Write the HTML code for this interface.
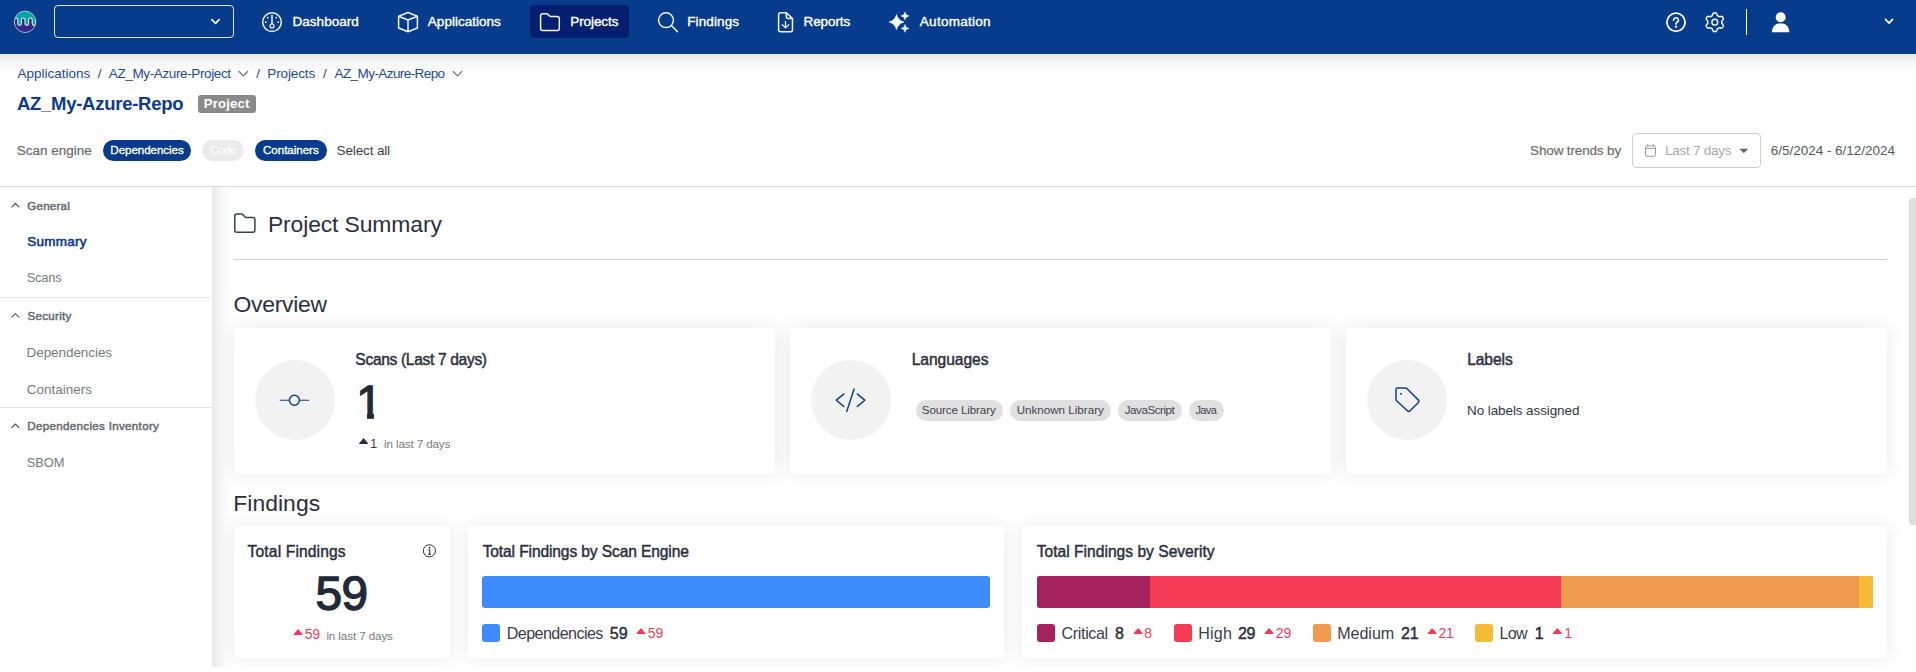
<!DOCTYPE html>
<html lang="en">
<head>
<meta charset="utf-8">
<title>AZ_My-Azure-Repo - Project Summary</title>
<style>
*{box-sizing:border-box;margin:0;padding:0}
html,body{width:1916px;height:672px;overflow:hidden;background:#fff}
body{position:relative;font-family:"Liberation Sans",Arial,sans-serif;color:#2b3040}
.a{position:absolute}
.t{position:absolute;white-space:nowrap;line-height:1;font-weight:400;paint-order:stroke fill}
svg{position:absolute;overflow:visible}
#nav{left:0;top:0;width:1916px;height:54px;background:#073b8c}
#navsh{left:0;top:54px;width:1916px;height:19px;background:linear-gradient(180deg,rgba(0,0,0,.088),rgba(0,0,0,.07) 17%,rgba(0,0,0,.044) 38%,rgba(0,0,0,.022) 60%,rgba(0,0,0,.008) 80%,rgba(0,0,0,0))}
#orgsel{left:54px;top:5px;width:180px;height:33px;border:1px solid rgba(255,255,255,.88);border-radius:4px}
#active{left:530px;top:5px;width:99px;height:33px;border-radius:4px;background:#041f6f}
#navdiv{left:1746px;top:9px;width:1px;height:26px;background:#fff}
#hdrline{left:0;top:186px;width:1916px;height:1px;background:#d6dadc}
#side{left:0;top:187px;width:212px;height:485px;background:#fff}
.sdiv{left:0;width:212px;height:1px;background:#e4e6e7}
#content{left:212px;top:187px;width:1704px;height:480px;background:#fff;overflow:hidden}
#content:before{content:"";position:absolute;left:0;top:0;width:20px;height:100%;background:linear-gradient(90deg,rgba(0,0,0,.09),rgba(0,0,0,.045) 35%,rgba(0,0,0,.015) 70%,rgba(0,0,0,0))}
#scroll{left:1909px;top:198px;width:7px;height:327px;border-radius:4px 0 0 4px;background:#dedede}
#hr{left:234px;top:259px;width:1653px;height:1px;background:#cbd2d6}
.card{background:#fff;border-radius:4px;box-shadow:0 0 20px rgba(0,0,0,.09)}
.circ{width:80px;height:80px;border-radius:50%;background:#f2f2f2}
.badge{left:198px;top:95px;width:58px;height:17.5px;border-radius:3px;background:#8b8b8b}
.pill{top:140px;height:21px;border-radius:11px;background:#073b8c}
.lpill{top:400px;height:21px;border-radius:11px;background:#e0e0e0}
#dd{left:1632px;top:133px;width:129px;height:35px;border:1px solid #c9ced1;border-radius:4px;background:#fff}
.bar{top:576px;height:32px}
.sq{top:623.5px;width:18px;height:18px;border-radius:3px}

</style>
</head>
<body>
<div class="a" id="hdrline"></div>
<div class="a" id="side"></div>
<div class="a sdiv" style="top:297px"></div>
<div class="a sdiv" style="top:407px"></div>
<div class="a" id="content">
<div class="a card" style="left:22px;top:141px;width:541px;height:145.5px"></div>
<div class="a card" style="left:578px;top:141px;width:541px;height:145.5px"></div>
<div class="a card" style="left:1134px;top:141px;width:541px;height:145.5px"></div>
<div class="a card" style="left:22px;top:339px;width:216px;height:131.7px"></div>
<div class="a card" style="left:256px;top:339px;width:536px;height:131.7px"></div>
<div class="a card" style="left:810px;top:339px;width:865px;height:131.7px"></div>
</div>
<div class="a" id="scroll"></div>
<div class="a" id="navsh"></div>
<div class="a" id="nav"></div>
<div class="a" id="orgsel"></div>
<div class="a" id="active"></div>
<div class="a" id="navdiv"></div>
<div class="a badge"></div>
<div class="a pill" style="left:103px;width:88px"></div>
<div class="a pill" style="left:202px;width:42px;background:#ebebec"></div>
<div class="a pill" style="left:255px;width:72px"></div>
<div class="a" id="dd"></div>
<div class="a" id="hr"></div>
<div class="a circ" style="left:254.5px;top:360px"></div>
<div class="a circ" style="left:810.5px;top:360px"></div>
<div class="a circ" style="left:1367px;top:360px"></div>
<div class="a lpill" style="left:916px;width:86.5px"></div>
<div class="a lpill" style="left:1010px;width:101px"></div>
<div class="a lpill" style="left:1118px;width:64px"></div>
<div class="a lpill" style="left:1189px;width:35px"></div>
<div class="a bar" style="left:482px;width:508px;background:#3d8bfd;border-radius:3px"></div>
<div class="a bar" style="left:1037px;width:836px;border-radius:3px;overflow:hidden;background:#f63b57">
  <div class="a" style="left:0;top:0;width:113px;height:32px;background:#a6225f"></div>
  <div class="a" style="left:524px;top:0;width:298px;height:32px;background:#ee9b4e"></div>
  <div class="a" style="left:822px;top:0;width:14px;height:32px;background:#f5ba36"></div>
</div>
<div class="a sq" style="left:482px;background:#3d8bfd"></div>
<div class="a sq" style="left:1037px;background:#a6225f"></div>
<div class="a sq" style="left:1174px;background:#f63b57"></div>
<div class="a sq" style="left:1313px;background:#ee9b4e"></div>
<div class="a sq" style="left:1475px;background:#f5ba36"></div>
<!-- icons -->
<svg id="icons" width="1916" height="672" viewBox="0 0 1916 672" style="left:0;top:0" fill="none">
<defs><clipPath id="lc"><circle cx="25.1" cy="21.8" r="10.7"/></clipPath></defs>
<g clip-path="url(#lc)"><rect x="13" y="10" width="25" height="24" fill="#05a5a3"/>
<path d="M14.2 36 V19.8 A1.8 1.8 0 0 1 17.8 19.8 V23.6 A1.8 1.8 0 0 0 21.4 23.6 V19.8 A1.8 1.8 0 0 1 25.0 19.8 V23.6 A1.8 1.8 0 0 0 28.6 23.6 V19.8 A1.8 1.8 0 0 1 32.2 19.8 V23.6 A1.8 1.8 0 0 0 35.8 23.6 V19.8 A1.8 1.8 0 0 1 39.4 19.8 V23.6 A1.8 1.8 0 0 0 43.0 23.6 V19.8 V36 Z" fill="#33288a" stroke="#e2f6f6" stroke-width="1.05"/></g>
<circle cx="25.1" cy="21.8" r="10.7" stroke="rgba(225,225,245,.75)" stroke-width="0.9"/>
<path d="M211.9 19.7 L215.5 23.3 L219.1 19.7" stroke="#fff" stroke-width="1.7" stroke-linecap="round" stroke-linejoin="round"/>
<g stroke="#fff" stroke-width="1.5" stroke-linecap="round" stroke-linejoin="round" opacity=".95">
<circle cx="272" cy="22.1" r="9.3"/><path d="M272 15.6 V23.8"/><circle cx="272" cy="25.9" r="2" stroke-width="1.2"/>
<circle cx="267.7" cy="17.7" r="0.9" fill="#fff" stroke="none"/>
<circle cx="276.2" cy="17.7" r="0.9" fill="#fff" stroke="none"/>
<circle cx="265.8" cy="22.2" r="0.9" fill="#fff" stroke="none"/>
<circle cx="278.1" cy="22.2" r="0.9" fill="#fff" stroke="none"/>
<path d="M408 12.5 L417.4 16.3 V28 L408 31.7 L398.6 28 V16.3 Z M398.6 16.3 L408 20 L417.4 16.3 M408 20 V31.7"/>
<path d="M542.6 13.7 H546.6 a1.6 1.6 0 0 1 1.1 .45 L549.6 15.95 a1.6 1.6 0 0 0 1.1 .45 H557.3 a2 2 0 0 1 2 2 V28.4 a2 2 0 0 1 -2 2 H542.6 a2 2 0 0 1 -2 -2 V15.7 a2 2 0 0 1 2 -2 Z" stroke-width="1.5"/>
<circle cx="666" cy="20.2" r="7.4"/><path d="M671.6 25.8 L677.4 31.6"/>
<path d="M780.6 12.7 H786.4 L792.5 18.6 V29.7 a2 2 0 0 1 -2 2 H780.6 a2 2 0 0 1 -2 -2 V14.7 a2 2 0 0 1 2 -2 Z M786.3 12.9 V16.6 a1.8 1.8 0 0 0 1.8 1.8 H792.3"/>
<path d="M785.5 21.3 V27.6 M782.2 24.6 L785.5 27.9 L788.8 24.6" stroke-width="1.3"/>
</g>
<path d="M896.50 14.60 Q898.00 20.60 904.00 22.10 Q898.00 23.60 896.50 29.60 Q895.00 23.60 889.00 22.10 Q895.00 20.60 896.50 14.60 Z M905.00 12.00 Q905.39 15.51 908.90 15.90 Q905.39 16.29 905.00 19.80 Q904.61 16.29 901.10 15.90 Q904.61 15.51 905.00 12.00 Z M905.00 24.50 Q905.39 28.01 908.90 28.40 Q905.39 28.79 905.00 32.30 Q904.61 28.79 901.10 28.40 Q904.61 28.01 905.00 24.50 Z" fill="#fff" stroke="#fff" stroke-width="0.6" stroke-linejoin="round"/>
<circle cx="1676" cy="22.2" r="9.1" stroke="#fff" stroke-width="1.8"/>
<path d="M1673.5 20.2 a2.45 2.4 0 1 1 3.9 1.9 c-.9 .55 -1.4 .95 -1.4 1.8" stroke="#fff" stroke-width="1.7" stroke-linecap="round" stroke-linejoin="round"/><circle cx="1676" cy="26.6" r="1.2" fill="#fff"/>
<path d="M1721.80 22.20 L1721.80 21.96 L1721.78 21.71 L1721.76 21.47 L1721.73 21.23 L1721.98 20.93 L1722.25 20.62 L1722.53 20.27 L1722.81 19.90 L1723.06 19.52 L1723.27 19.12 L1723.42 18.72 L1723.30 18.42 L1723.16 18.12 L1723.01 17.83 L1722.85 17.55 L1722.69 17.27 L1722.51 17.00 L1722.32 16.73 L1722.13 16.47 L1721.70 16.41 L1721.25 16.39 L1720.79 16.41 L1720.34 16.47 L1719.90 16.54 L1719.48 16.62 L1719.11 16.68 L1718.91 16.54 L1718.71 16.40 L1718.51 16.26 L1718.30 16.14 L1718.09 16.02 L1717.87 15.91 L1717.65 15.81 L1717.42 15.71 L1717.29 15.35 L1717.15 14.96 L1717.00 14.54 L1716.82 14.12 L1716.61 13.71 L1716.37 13.32 L1716.09 12.99 L1715.77 12.95 L1715.45 12.92 L1715.12 12.91 L1714.80 12.90 L1714.48 12.91 L1714.15 12.92 L1713.83 12.95 L1713.51 12.99 L1713.23 13.32 L1712.99 13.71 L1712.78 14.12 L1712.60 14.54 L1712.45 14.96 L1712.31 15.35 L1712.18 15.71 L1711.95 15.81 L1711.73 15.91 L1711.51 16.02 L1711.30 16.14 L1711.09 16.26 L1710.89 16.40 L1710.69 16.54 L1710.49 16.68 L1710.12 16.62 L1709.70 16.54 L1709.26 16.47 L1708.81 16.41 L1708.35 16.39 L1707.90 16.41 L1707.47 16.47 L1707.28 16.73 L1707.09 17.00 L1706.91 17.27 L1706.75 17.55 L1706.59 17.83 L1706.44 18.12 L1706.30 18.42 L1706.18 18.72 L1706.33 19.12 L1706.54 19.52 L1706.79 19.90 L1707.07 20.27 L1707.35 20.62 L1707.62 20.93 L1707.87 21.23 L1707.84 21.47 L1707.82 21.71 L1707.80 21.96 L1707.80 22.20 L1707.80 22.44 L1707.82 22.69 L1707.84 22.93 L1707.87 23.17 L1707.62 23.47 L1707.35 23.78 L1707.07 24.13 L1706.79 24.50 L1706.54 24.88 L1706.33 25.28 L1706.18 25.68 L1706.30 25.98 L1706.44 26.28 L1706.59 26.57 L1706.75 26.85 L1706.91 27.13 L1707.09 27.40 L1707.28 27.67 L1707.47 27.93 L1707.90 27.99 L1708.35 28.01 L1708.81 27.99 L1709.26 27.93 L1709.70 27.86 L1710.12 27.78 L1710.49 27.72 L1710.69 27.86 L1710.89 28.00 L1711.09 28.14 L1711.30 28.26 L1711.51 28.38 L1711.73 28.49 L1711.95 28.59 L1712.18 28.69 L1712.31 29.05 L1712.45 29.44 L1712.60 29.86 L1712.78 30.28 L1712.99 30.69 L1713.23 31.08 L1713.51 31.41 L1713.83 31.45 L1714.15 31.48 L1714.48 31.49 L1714.80 31.50 L1715.12 31.49 L1715.45 31.48 L1715.77 31.45 L1716.09 31.41 L1716.37 31.08 L1716.61 30.69 L1716.82 30.28 L1717.00 29.86 L1717.15 29.44 L1717.29 29.05 L1717.42 28.69 L1717.65 28.59 L1717.87 28.49 L1718.09 28.38 L1718.30 28.26 L1718.51 28.14 L1718.71 28.00 L1718.91 27.86 L1719.11 27.72 L1719.48 27.78 L1719.90 27.86 L1720.34 27.93 L1720.79 27.99 L1721.25 28.01 L1721.70 27.99 L1722.13 27.93 L1722.32 27.67 L1722.51 27.40 L1722.69 27.13 L1722.85 26.85 L1723.01 26.57 L1723.16 26.28 L1723.30 25.98 L1723.42 25.68 L1723.27 25.28 L1723.06 24.88 L1722.81 24.50 L1722.53 24.13 L1722.25 23.78 L1721.98 23.47 L1721.73 23.17 L1721.76 22.93 L1721.78 22.69 L1721.80 22.44 Z" stroke="#fff" stroke-width="1.45" stroke-linejoin="round"/>
<circle cx="1714.8" cy="22.2" r="2.9" stroke="#fff" stroke-width="1.4"/>
<circle cx="1780.7" cy="17.2" r="5" fill="#fff"/>
<path d="M1771.9 32.2 C1771.9 27.2 1775.3 23.6 1778.6 23.6 H1782.7 C1786 23.6 1789.3 27.2 1789.3 32.2 Z" fill="#fff"/>
<path d="M1885.5 19.3 L1889.05 23.1 L1892.6 19.3" stroke="#fff" stroke-width="1.7" stroke-linecap="round" stroke-linejoin="round"/>
<path d="M239.0 71.5 L243.3 75.9 L247.6 71.5" stroke="#697386" stroke-width="1.2" stroke-linecap="round" stroke-linejoin="round"/>
<path d="M453.2 71.5 L457.5 75.9 L461.8 71.5" stroke="#697386" stroke-width="1.2" stroke-linecap="round" stroke-linejoin="round"/>
<path d="M11.8 207.0 L15.4 203.4 L19 207.0" stroke="#555b63" stroke-width="1.15" stroke-linecap="round" stroke-linejoin="round"/>
<path d="M11.8 317.2 L15.4 313.6 L19 317.2" stroke="#555b63" stroke-width="1.15" stroke-linecap="round" stroke-linejoin="round"/>
<path d="M11.8 427.6 L15.4 424.0 L19 427.6" stroke="#555b63" stroke-width="1.15" stroke-linecap="round" stroke-linejoin="round"/>
<g stroke="#9b9b9b" stroke-width="1"><rect x="1645.5" y="145.9" width="10" height="10.4" rx="1.4" fill="#fff"/><path d="M1645.5 148.4 H1655.5 M1647.6 144 V146 M1653.4 144 V146"/></g>
<path d="M1739.9 149 H1747.7 L1743.8 153 Z" fill="#666" stroke="#666" stroke-width="0.5" stroke-linejoin="round"/>
<path d="M236.8 214 H241.5 a1.8 1.8 0 0 1 1.2 .5 L245 216.9 a1.8 1.8 0 0 0 1.2 .5 H252.9 a2 2 0 0 1 2 2 V230.2 a2 2 0 0 1 -2 2 H236.8 a2 2 0 0 1 -2 -2 V216 a2 2 0 0 1 2 -2 Z" stroke="#364052" stroke-width="1.5" stroke-linejoin="round"/>
<g stroke="#0f3f8f" stroke-linecap="round"><circle cx="294.4" cy="400.2" r="5" stroke-width="1.45"/><path d="M280.2 400.2 H289.2 M299.6 400.2 H308.6" stroke-width="1.15"/></g>
<path d="M843.7 394.1 L836.3 400.2 L843.7 406.4 M854.1 389 L846.7 411.4 M857.4 394.1 L864.8 400.2 L857.4 406.4" stroke="#0f3f8f" stroke-width="1.5" stroke-linecap="round" stroke-linejoin="round"/>
<path d="M1397.6 388 H1405.4 a2 2 0 0 1 1.4 .6 L1418.2 399.9 a2 2 0 0 1 0 2.8 L1410.1 410.7 a2 2 0 0 1 -2.8 0 L1396.6 400.8 a2 2 0 0 1 -.6 -1.4 V389.6 a1.6 1.6 0 0 1 1.6 -1.6 Z" stroke="#0f3f8f" stroke-width="1.5" stroke-linejoin="round"/><circle cx="1401.1" cy="393.8" r="1" fill="#0f3f8f"/>
<circle cx="429.4" cy="550.8" r="6.05" stroke="#2b3040" stroke-width="1"/><path d="M428.3 549.7 H429.7 V554.2 M428.1 554.3 H431" stroke="#2b3040" stroke-width="1.1"/><circle cx="429.5" cy="547.6" r="0.85" fill="#2b3040"/>
<path d="M363.60 438.90 L367.40 443.40 H359.80 Z" fill="#2b3040" stroke="#2b3040" stroke-width="1.2" stroke-linejoin="round"/>
<path d="M298.10 629.80 L301.90 634.30 H294.30 Z" fill="#f43b57" stroke="#f43b57" stroke-width="1.2" stroke-linejoin="round"/>
<path d="M641.00 628.90 L644.80 633.40 H637.20 Z" fill="#f43b57" stroke="#f43b57" stroke-width="1.2" stroke-linejoin="round"/>
<path d="M1138.20 628.90 L1142.00 633.40 H1134.40 Z" fill="#f43b57" stroke="#f43b57" stroke-width="1.2" stroke-linejoin="round"/>
<path d="M1269.10 628.90 L1272.90 633.40 H1265.30 Z" fill="#f43b57" stroke="#f43b57" stroke-width="1.2" stroke-linejoin="round"/>
<path d="M1432.10 628.90 L1435.90 633.40 H1428.30 Z" fill="#f43b57" stroke="#f43b57" stroke-width="1.2" stroke-linejoin="round"/>
<path d="M1557.30 628.90 L1561.10 633.40 H1553.50 Z" fill="#f43b57" stroke="#f43b57" stroke-width="1.2" stroke-linejoin="round"/>
</svg>

<!-- text layer -->
<span class="t" id="nav0" style="left:292.55px;top:14.82px;font-size:13.50px;letter-spacing:0.021px;color:#ffffff;-webkit-text-stroke:0.38px currentColor;">Dashboard</span>
<span class="t" id="nav1" style="left:427.85px;top:14.82px;font-size:13.50px;letter-spacing:0.018px;color:#ffffff;-webkit-text-stroke:0.38px currentColor;">Applications</span>
<span class="t" id="nav2" style="left:570.22px;top:14.82px;font-size:13.50px;letter-spacing:-0.076px;color:#ffffff;-webkit-text-stroke:0.38px currentColor;">Projects</span>
<span class="t" id="nav3" style="left:687.22px;top:14.82px;font-size:13.50px;letter-spacing:0.110px;color:#ffffff;-webkit-text-stroke:0.38px currentColor;">Findings</span>
<span class="t" id="nav4" style="left:803.54px;top:14.82px;font-size:13.50px;letter-spacing:-0.098px;color:#ffffff;-webkit-text-stroke:0.38px currentColor;">Reports</span>
<span class="t" id="nav5" style="left:919.85px;top:14.82px;font-size:13.50px;letter-spacing:0.261px;color:#ffffff;-webkit-text-stroke:0.38px currentColor;">Automation</span>
<span class="t" id="bc0" style="left:17.60px;top:66.82px;font-size:13.50px;letter-spacing:-0.016px;color:#1f4a94;">Applications</span>
<span class="t" id="bs0" style="left:97.87px;top:66.82px;font-size:13.50px;letter-spacing:0.000px;color:#3a4660;">/</span>
<span class="t" id="bc1" style="left:108.86px;top:66.82px;font-size:13.50px;letter-spacing:-0.378px;color:#1f4a94;">AZ_My-Azure-Project</span>
<span class="t" id="bs1" style="left:256.31px;top:66.82px;font-size:13.50px;letter-spacing:0.000px;color:#3a4660;">/</span>
<span class="t" id="bc2" style="left:267.33px;top:66.82px;font-size:13.50px;letter-spacing:-0.134px;color:#1f4a94;">Projects</span>
<span class="t" id="bs2" style="left:323.11px;top:66.82px;font-size:13.50px;letter-spacing:0.000px;color:#3a4660;">/</span>
<span class="t" id="bc3" style="left:334.54px;top:66.82px;font-size:13.50px;letter-spacing:-0.579px;color:#1f4a94;">AZ_My-Azure-Repo</span>
<span class="t" id="title" style="left:16.93px;top:95.15px;font-size:18.50px;letter-spacing:-0.269px;color:#0c3a88;font-weight:700;">AZ_My-Azure-Repo</span>
<span class="t" id="badge" style="left:203.85px;top:96.95px;font-size:13.20px;letter-spacing:0.151px;color:#ffffff;font-weight:700;">Project</span>
<span class="t" id="scaneng" style="left:16.65px;top:143.82px;font-size:13.50px;letter-spacing:0.015px;color:#6a6a6a;-webkit-text-stroke:0.19px currentColor;">Scan engine</span>
<span class="t" id="pill0" style="left:110.36px;top:144.13px;font-size:11.60px;letter-spacing:-0.070px;color:#ffffff;-webkit-text-stroke:0.32px currentColor;">Dependencies</span>
<span class="t" id="pill1" style="left:209.93px;top:144.13px;font-size:11.60px;letter-spacing:-0.518px;color:#fbfbfb;-webkit-text-stroke:0.32px currentColor;">Code</span>
<span class="t" id="pill2" style="left:263.03px;top:144.13px;font-size:11.60px;letter-spacing:-0.039px;color:#ffffff;-webkit-text-stroke:0.32px currentColor;">Containers</span>
<span class="t" id="selall" style="left:336.62px;top:143.82px;font-size:13.50px;letter-spacing:-0.141px;color:#3a3f50;">Select all</span>
<span class="t" id="trends" style="left:1530.10px;top:143.82px;font-size:13.50px;letter-spacing:-0.151px;color:#6e6e6e;-webkit-text-stroke:0.19px currentColor;">Show trends by</span>
<span class="t" id="last7" style="left:1665.05px;top:143.82px;font-size:13.50px;letter-spacing:-0.270px;color:#a9a9a9;">Last 7 days</span>
<span class="t" id="dates" style="left:1770.86px;top:143.82px;font-size:13.50px;letter-spacing:-0.028px;color:#555a60;">6/5/2024 - 6/12/2024</span>
<span class="t" id="sb0" style="left:27.29px;top:199.94px;font-size:11.60px;letter-spacing:0.208px;color:#666a70;-webkit-text-stroke:0.49px currentColor;">General</span>
<span class="t" id="sb1" style="left:27.35px;top:235.01px;font-size:13.50px;letter-spacing:0.226px;color:#0c3a88;-webkit-text-stroke:0.57px currentColor;">Summary</span>
<span class="t" id="sb2" style="left:26.76px;top:272.09px;font-size:12.90px;letter-spacing:-0.236px;color:#777b80;">Scans</span>
<span class="t" id="sb3" style="left:27.55px;top:310.13px;font-size:11.60px;letter-spacing:0.259px;color:#666a70;-webkit-text-stroke:0.49px currentColor;">Security</span>
<span class="t" id="sb4" style="left:26.56px;top:345.89px;font-size:13.50px;letter-spacing:-0.071px;color:#777b80;">Dependencies</span>
<span class="t" id="sb5" style="left:26.71px;top:383.22px;font-size:13.50px;letter-spacing:-0.012px;color:#777b80;">Containers</span>
<span class="t" id="sb6" style="left:27.31px;top:419.87px;font-size:11.60px;letter-spacing:0.312px;color:#666a70;-webkit-text-stroke:0.49px currentColor;">Dependencies Inventory</span>
<span class="t" id="sb7" style="left:26.76px;top:457.13px;font-size:12.90px;letter-spacing:-0.050px;color:#777b80;">SBOM</span>
<span class="t" id="h1" style="left:267.92px;top:212.86px;font-size:22.90px;letter-spacing:-0.115px;color:#2b3040;">Project Summary</span>
<span class="t" id="h2" style="left:233.44px;top:292.97px;font-size:22.90px;letter-spacing:-0.257px;color:#2b3040;">Overview</span>
<span class="t" id="h3" style="left:233.21px;top:491.76px;font-size:22.90px;letter-spacing:0.058px;color:#2b3040;">Findings</span>
<span class="t" id="c1h" style="left:355.36px;top:351.84px;font-size:15.60px;letter-spacing:-0.339px;color:#2b3040;-webkit-text-stroke:0.44px currentColor;">Scans (Last 7 days)</span>
<span class="t" id="c1n" style="left:356.37px;top:378.83px;font-size:46.80px;letter-spacing:0.000px;color:#222a3a;-webkit-text-stroke:1.31px currentColor;clip-path:polygon(0 0,100% 0,100% 34.3px,17.5px 34.3px,17.5px 100%,10.7px 100%,10.7px 34.3px,0 34.3px);">1</span>
<span class="t" id="c1d" style="left:370.11px;top:436.96px;font-size:13.00px;letter-spacing:0.000px;color:#3a4050;">1</span>
<span class="t" id="c1l" style="left:384.07px;top:438.02px;font-size:11.60px;letter-spacing:-0.111px;color:#777b80;">in last 7 days</span>
<span class="t" id="c2h" style="left:911.63px;top:351.84px;font-size:15.60px;letter-spacing:-0.046px;color:#2b3040;-webkit-text-stroke:0.44px currentColor;">Languages</span>
<span class="t" id="lp0" style="left:921.78px;top:403.94px;font-size:11.60px;letter-spacing:-0.108px;color:#40444e;">Source Library</span>
<span class="t" id="lp1" style="left:1016.63px;top:403.94px;font-size:11.60px;letter-spacing:0.016px;color:#40444e;">Unknown Library</span>
<span class="t" id="lp2" style="left:1124.67px;top:403.94px;font-size:11.60px;letter-spacing:-0.438px;color:#40444e;">JavaScript</span>
<span class="t" id="lp3" style="left:1195.44px;top:405.14px;font-size:11.00px;letter-spacing:-0.600px;color:#40444e;">Java</span>
<span class="t" id="c3h" style="left:1467.14px;top:351.84px;font-size:15.60px;letter-spacing:-0.075px;color:#2b3040;-webkit-text-stroke:0.44px currentColor;">Labels</span>
<span class="t" id="c3t" style="left:1467.05px;top:403.89px;font-size:13.50px;letter-spacing:-0.098px;color:#333844;">No labels assigned</span>
<span class="t" id="f1h" style="left:247.60px;top:543.95px;font-size:15.60px;letter-spacing:0.142px;color:#2b3040;-webkit-text-stroke:0.44px currentColor;">Total Findings</span>
<span class="t" id="f1n" style="left:315.42px;top:570.00px;font-size:47.80px;letter-spacing:-0.600px;color:#222a3a;-webkit-text-stroke:1.34px currentColor;">59</span>
<span class="t" id="f1d" style="left:304.75px;top:626.87px;font-size:14.00px;letter-spacing:-0.253px;color:#f0405b;">59</span>
<span class="t" id="f1l" style="left:326.38px;top:630.05px;font-size:11.60px;letter-spacing:-0.088px;color:#777b80;">in last 7 days</span>
<span class="t" id="f2h" style="left:482.67px;top:543.95px;font-size:15.60px;letter-spacing:-0.128px;color:#2b3040;-webkit-text-stroke:0.44px currentColor;">Total Findings by Scan Engine</span>
<span class="t" id="f2a" style="left:506.84px;top:625.18px;font-size:16.10px;letter-spacing:-0.576px;color:#3a3f4e;">Dependencies</span>
<span class="t" id="f2b" style="left:609.79px;top:626.20px;font-size:16.00px;letter-spacing:-0.039px;color:#2b3040;-webkit-text-stroke:0.45px currentColor;">59</span>
<span class="t" id="f2c" style="left:647.71px;top:626.02px;font-size:14.00px;letter-spacing:0.031px;color:#f0405b;">59</span>
<span class="t" id="f3h" style="left:1036.79px;top:543.95px;font-size:15.60px;letter-spacing:0.006px;color:#2b3040;-webkit-text-stroke:0.44px currentColor;">Total Findings by Severity</span>
<span class="t" id="s0a" style="left:1061.60px;top:625.18px;font-size:16.10px;letter-spacing:-0.369px;color:#3a3f4e;">Critical</span>
<span class="t" id="s0b" style="left:1114.97px;top:626.20px;font-size:16.00px;letter-spacing:0.000px;color:#2b3040;-webkit-text-stroke:0.45px currentColor;">8</span>
<span class="t" id="s0c" style="left:1144.35px;top:626.02px;font-size:14.00px;letter-spacing:0.000px;color:#f0405b;">8</span>
<span class="t" id="s1a" style="left:1198.14px;top:625.18px;font-size:16.10px;letter-spacing:0.224px;color:#3a3f4e;">High</span>
<span class="t" id="s1b" style="left:1238.11px;top:626.20px;font-size:16.00px;letter-spacing:-0.576px;color:#2b3040;-webkit-text-stroke:0.45px currentColor;">29</span>
<span class="t" id="s1c" style="left:1275.87px;top:626.02px;font-size:14.00px;letter-spacing:-0.214px;color:#f0405b;">29</span>
<span class="t" id="s2a" style="left:1337.14px;top:625.18px;font-size:16.10px;letter-spacing:-0.029px;color:#3a3f4e;">Medium</span>
<span class="t" id="s2b" style="left:1401.06px;top:626.20px;font-size:16.00px;letter-spacing:-0.300px;color:#2b3040;-webkit-text-stroke:0.45px currentColor;">21</span>
<span class="t" id="s2c" style="left:1438.61px;top:626.02px;font-size:14.00px;letter-spacing:-0.300px;color:#f0405b;">21</span>
<span class="t" id="s3a" style="left:1499.40px;top:625.18px;font-size:16.10px;letter-spacing:-0.600px;color:#3a3f4e;">Low</span>
<span class="t" id="s3b" style="left:1534.72px;top:626.20px;font-size:16.00px;letter-spacing:0.000px;color:#2b3040;-webkit-text-stroke:0.45px currentColor;">1</span>
<span class="t" id="s3c" style="left:1564.28px;top:626.02px;font-size:14.00px;letter-spacing:0.000px;color:#f0405b;">1</span>
</body>
</html>
